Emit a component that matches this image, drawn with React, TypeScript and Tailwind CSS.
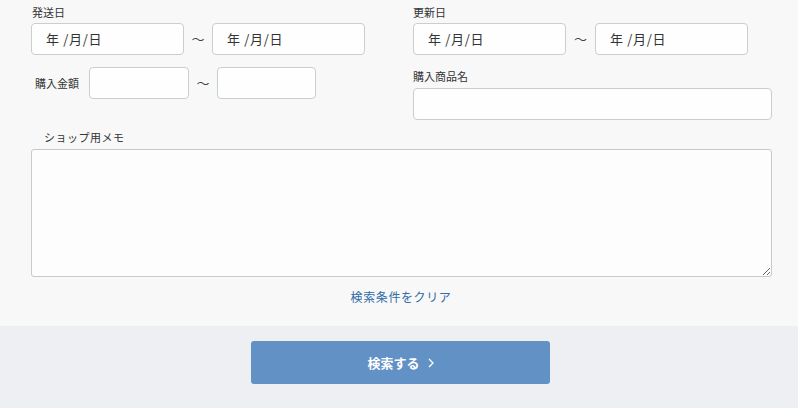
const font = { fontFamily: '"Noto Sans CJK JP", "Noto Sans", sans-serif' };

const DateBox = () => (
  <div className="flex h-[32px] w-[153px] items-center rounded-[4px] border border-[#c9cfcf] bg-[#fdfefd] pl-[14px] text-[13px] tracking-[0.7px] text-[#333]">
    年 /月/日
  </div>
);

const Tilde = ({ w }: { w: string }) => (
  <span className={`${w} flex items-center justify-center text-[13px] text-[#444]`}>〜</span>
);

const App = (): JSX.Element => {
  return (
    <div className="flex h-[408px] w-[798px] flex-col bg-[#f8f8f9]" style={font}>
      <div className="flex flex-col px-[31px]">
        <div className="grid grid-cols-[358px_359px] gap-x-[24px]">
          {/* left column */}
          <div className="flex flex-col">
            <label className="mt-[5px] h-[18px] pl-[1px] text-[11px] leading-[14px] text-[#333]">発送日</label>
            <div className="flex">
              <DateBox />
              <Tilde w="w-[28px]" />
              <DateBox />
            </div>
            <div className="mt-[12px] flex items-center">
              <span className="w-[58px] pl-[4px] text-[11px] text-[#333]">購入金額</span>
              <div className="h-[32px] w-[100px] rounded-[4px] border border-[#c9cfcf] bg-[#fdfefd]" />
              <Tilde w="w-[28px]" />
              <div className="h-[32px] w-[99px] rounded-[4px] border border-[#c9cfcf] bg-[#fdfefd]" />
            </div>
          </div>
          {/* right column */}
          <div className="flex flex-col">
            <label className="mt-[5px] h-[18px] text-[11px] leading-[14px] text-[#333]">更新日</label>
            <div className="flex">
              <DateBox />
              <Tilde w="w-[29px]" />
              <DateBox />
            </div>
            <label className="mt-[14px] h-[19px] text-[11px] leading-[14px] text-[#333]">購入商品名</label>
            <div className="h-[32px] w-[359px] rounded-[4px] border border-[#c9cfcf] bg-[#fdfefd]" />
          </div>
        </div>
        <label className="mt-[10px] h-[19px] pl-[13px] text-[11px] leading-[14px] tracking-[0.5px] text-[#333]">ショップ用メモ</label>
        <textarea className="h-[128px] w-[741px] resize-y rounded-[3px] border border-[#c3cbcb] bg-[#fcfdfc] outline-none" />
        <div className="mt-[12px] flex justify-center pl-[4px]">
          <a className="cursor-pointer text-[12px] leading-[16px] tracking-[0.6px] text-[#2e6ba6]">検索条件をクリア</a>
        </div>
      </div>
      <div className="mt-auto flex h-[82px] justify-center bg-[#eeeff3] pt-[15px] pl-[3px]">
        <button className="flex h-[43px] w-[299px] items-center justify-center gap-[8px] rounded-[3px] bg-[#6291c5] text-[13px] font-bold text-white">
          検索する
          <svg width="6" height="10" viewBox="0 0 6 10" fill="none" stroke="white" strokeWidth="1.3">
            <path d="M1 1l4 4-4 4" />
          </svg>
        </button>
      </div>
    </div>
  );
};

export default App;
